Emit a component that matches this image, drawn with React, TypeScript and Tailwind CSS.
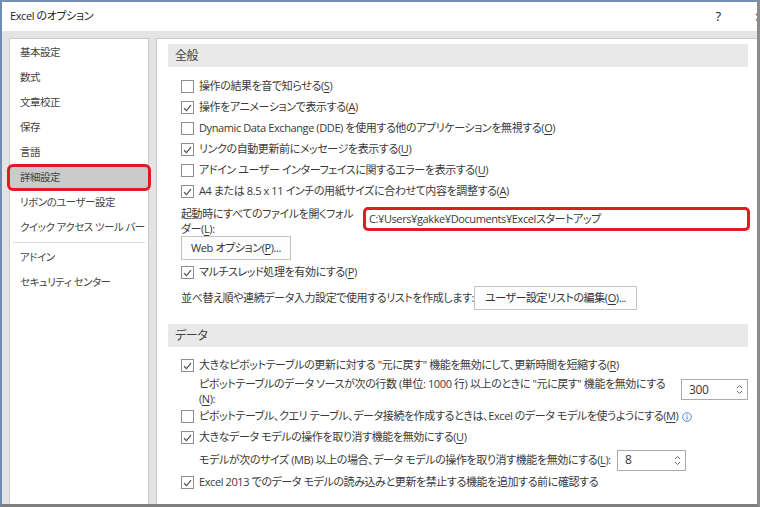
import type { ReactNode } from "react";

const font =
  "font-['Open_Sans','Noto_Sans_CJK_JP',sans-serif] [font-feature-settings:'palt']";

function U({ c }: { c: string }) {
  return <span className="underline underline-offset-2">{c}</span>;
}

function Check({ checked }: { checked?: boolean }) {
  return (
    <span className="flex h-[13px] w-[13px] shrink-0 items-center justify-center border border-[#8e8e8e] bg-white">
      {checked && (
        <svg width="9" height="8" viewBox="0 0 9 8">
          <path d="M1 4.2 L3.5 6.6 L8 1.2" fill="none" stroke="#555" strokeWidth="1.3" />
        </svg>
      )}
    </span>
  );
}

function CheckRow({ checked, children }: { checked?: boolean; children: ReactNode }) {
  return (
    <div className="flex h-[21px] items-center gap-[5px] pl-[13px] whitespace-nowrap">
      <Check checked={checked} />
      <span>{children}</span>
    </div>
  );
}

function Section({ title }: { title: string }) {
  return (
    <div className="flex h-[23px] items-center bg-[#e9e9e9] pl-[7px] text-[12px] text-[#444]">
      {title}
    </div>
  );
}

function Spin({ value, width }: { value: string; width: string }) {
  return (
    <div
      className={`flex h-[21px] shrink-0 items-center justify-between border border-[#ababab] bg-white pl-[7px] pr-[4px] ${width}`}
    >
      <span className="text-[12px]">{value}</span>
      <svg width="7" height="11" viewBox="0 0 7 11">
        <path d="M1 4 L3.5 1.5 L6 4" fill="none" stroke="#666" strokeWidth="1" />
        <path d="M1 7 L3.5 9.5 L6 7" fill="none" stroke="#666" strokeWidth="1" />
      </svg>
    </div>
  );
}

const navTop = ["基本設定", "数式", "文章校正", "保存", "言語"];
const navMid = ["リボンのユーザー設定", "クイック アクセス ツール バー"];
const navBottom = ["アドイン", "セキュリティ センター"];

export default function App() {
  return (
    <div
      className={`flex h-[507px] w-[760px] flex-col overflow-hidden border-t-2 border-r-[3px] border-b-[3px] border-l-2 border-t-[#7590b0] border-r-[#8c8c8c] border-b-[#7e7e7e] border-l-[#6f8db0] bg-white text-[11px] tracking-[-0.4px] text-[#3a3a3a] ${font}`}
    >
      {/* title bar */}
      <div className="flex h-[29px] shrink-0 items-center bg-white pl-[8px] text-[#222]">
        <span>Excel のオプション</span>
        <div className="ml-auto flex items-center">
          <span className="mr-[25px] w-[16px] text-center text-[13px]">?</span>
          <span className="mr-[-10px] w-[16px] text-center text-[16px]">×</span>
        </div>
      </div>

      <div className="flex min-h-0 flex-1 bg-[#e4e4e4] pt-[7px] pl-[7px]">
        {/* left nav */}
        <div className="relative w-[140px] shrink-0 border border-b-0 border-[#c9c9c9] bg-white pt-px text-[10.5px] tracking-[-0.5px] text-[#444]">
          {navTop.map((t) => (
            <div key={t} className="flex h-[25px] items-center pl-[10px] whitespace-pre">
              {t}
            </div>
          ))}
          <div className="relative flex h-[25px] items-center bg-[#cbcbcb] pl-[10px]">
            詳細設定
            <span className="pointer-events-none absolute -top-[1px] -right-[3px] -bottom-[1px] -left-[3px] rounded-[6px] border-[3px] border-[#e01b24]" />
          </div>
          {navMid.map((t) => (
            <div key={t} className="flex h-[25px] items-center pl-[10px] whitespace-pre">
              {t}
            </div>
          ))}
          <div className="mx-[3px] my-[2px] h-px bg-[#dadada]" />
          {navBottom.map((t) => (
            <div key={t} className="flex h-[25px] items-center pl-[10px] whitespace-pre">
              {t}
            </div>
          ))}
        </div>

        {/* right panel */}
        <div className="ml-[7px] min-w-0 flex-1 border-l border-t border-[#c9c9c9] bg-white pt-[5px] pr-[9px] pl-[11px]">
          <Section title="全般" />
          <div className="mt-[9px]">
            <CheckRow>
              操作の結果を音で知らせる(<U c="S" />)
            </CheckRow>
            <CheckRow checked>
              操作をアニメーションで表示する(<U c="A" />)
            </CheckRow>
            <CheckRow>
              Dynamic Data Exchange (DDE) を使用する他のアプリケーションを無視する(<U c="O" />)
            </CheckRow>
            <CheckRow checked>
              リンクの自動更新前にメッセージを表示する(<U c="U" />)
            </CheckRow>
            <CheckRow>
              アドイン ユーザー インターフェイスに関するエラーを表示する(<U c="U" />)
            </CheckRow>
            <CheckRow checked>
              A4 または 8.5 x 11 インチの用紙サイズに合わせて内容を調整する(<U c="A" />)
            </CheckRow>
          </div>

          <div className="mt-[2px] flex items-start pl-[13px]">
            <div className="w-[184px] shrink-0 pt-[2px] leading-[15px] whitespace-nowrap">
              起動時にすべてのファイルを開くフォル
              <br />
              ダー(<U c="L" />):
            </div>
            <div className="relative mt-[5px] flex h-[20px] flex-1 items-center border border-[#ababab] bg-white pl-[3px] whitespace-nowrap">
              C:¥Users¥gakke¥Documents¥Excelスタートアップ
              <span className="pointer-events-none absolute -top-[3px] -right-[3px] -bottom-[3px] -left-[3px] rounded-[5px] border-[3px] border-[#e01b24]" />
            </div>
          </div>

          <div className="pl-[13px]">
            <button className="block h-[24px] w-[110px] border border-[#c4c4c4] bg-[#fdfdfd] pl-[9px] text-left whitespace-nowrap text-[#333]">
              Web オプション(<U c="P" />)...
            </button>
          </div>

          <div className="mt-[2px]">
            <CheckRow checked>
              マルチスレッド処理を有効にする(<U c="P" />)
            </CheckRow>
          </div>

          <div className="mt-[3px] flex h-[24px] items-center pl-[13px]">
            <span className="w-[293px] shrink-0 whitespace-nowrap">
              並べ替え順や連続データ入力設定で使用するリストを作成します:
            </span>
            <button className="block h-[24px] w-[163px] border border-[#c4c4c4] bg-[#fdfdfd] text-center whitespace-nowrap text-[#333]">
              ユーザー設定リストの編集(<U c="O" />)...
            </button>
          </div>

          <div className="mt-[14px]">
            <Section title="データ" />
          </div>

          <div className="mt-[8px]">
            <CheckRow checked>
              大きなピボットテーブルの更新に対する "元に戻す" 機能を無効にして、更新時間を短縮する(<U c="R" />)
            </CheckRow>
            <div className="flex items-start pl-[31px]">
              <div className="min-w-0 flex-1 leading-[15px] whitespace-nowrap">
                ピボットテーブルのデータ ソースが次の行数 (単位: 1000 行) 以上のときに "元に戻す" 機能を無効にする
                <br />(<U c="N" />):
              </div>
              <div className="mt-[3px]">
                <Spin value="300" width="w-[67px]" />
              </div>
            </div>
            <CheckRow>
              <span className="inline-flex items-center gap-[4px]">
                <span>
                  ピボットテーブル、クエリ テーブル、データ接続を作成するときは、Excel のデータ モデルを使うようにする(<U c="M" />)
                </span>
                <svg width="10" height="10" viewBox="0 0 10 10">
                  <circle cx="5" cy="5" r="4.3" fill="none" stroke="#3b7fd0" strokeWidth="0.9" />
                  <circle cx="5" cy="2.9" r="0.7" fill="#3b7fd0" />
                  <path d="M5 4.3 V7.6" stroke="#3b7fd0" strokeWidth="1" />
                </svg>
              </span>
            </CheckRow>
            <CheckRow checked>
              大きなデータ モデルの操作を取り消す機能を無効にする(<U c="U" />)
            </CheckRow>
            <div className="flex h-[24px] items-center pl-[31px]">
              <span className="w-[418px] shrink-0 whitespace-nowrap">
                モデルが次のサイズ (MB) 以上の場合、データ モデルの操作を取り消す機能を無効にする(<U c="L" />):
              </span>
              <Spin value="8" width="w-[69px]" />
            </div>
            <CheckRow checked>
              Excel 2013 でのデータ モデルの読み込みと更新を禁止する機能を追加する前に確認する
            </CheckRow>
          </div>
        </div>
      </div>
    </div>
  );
}
